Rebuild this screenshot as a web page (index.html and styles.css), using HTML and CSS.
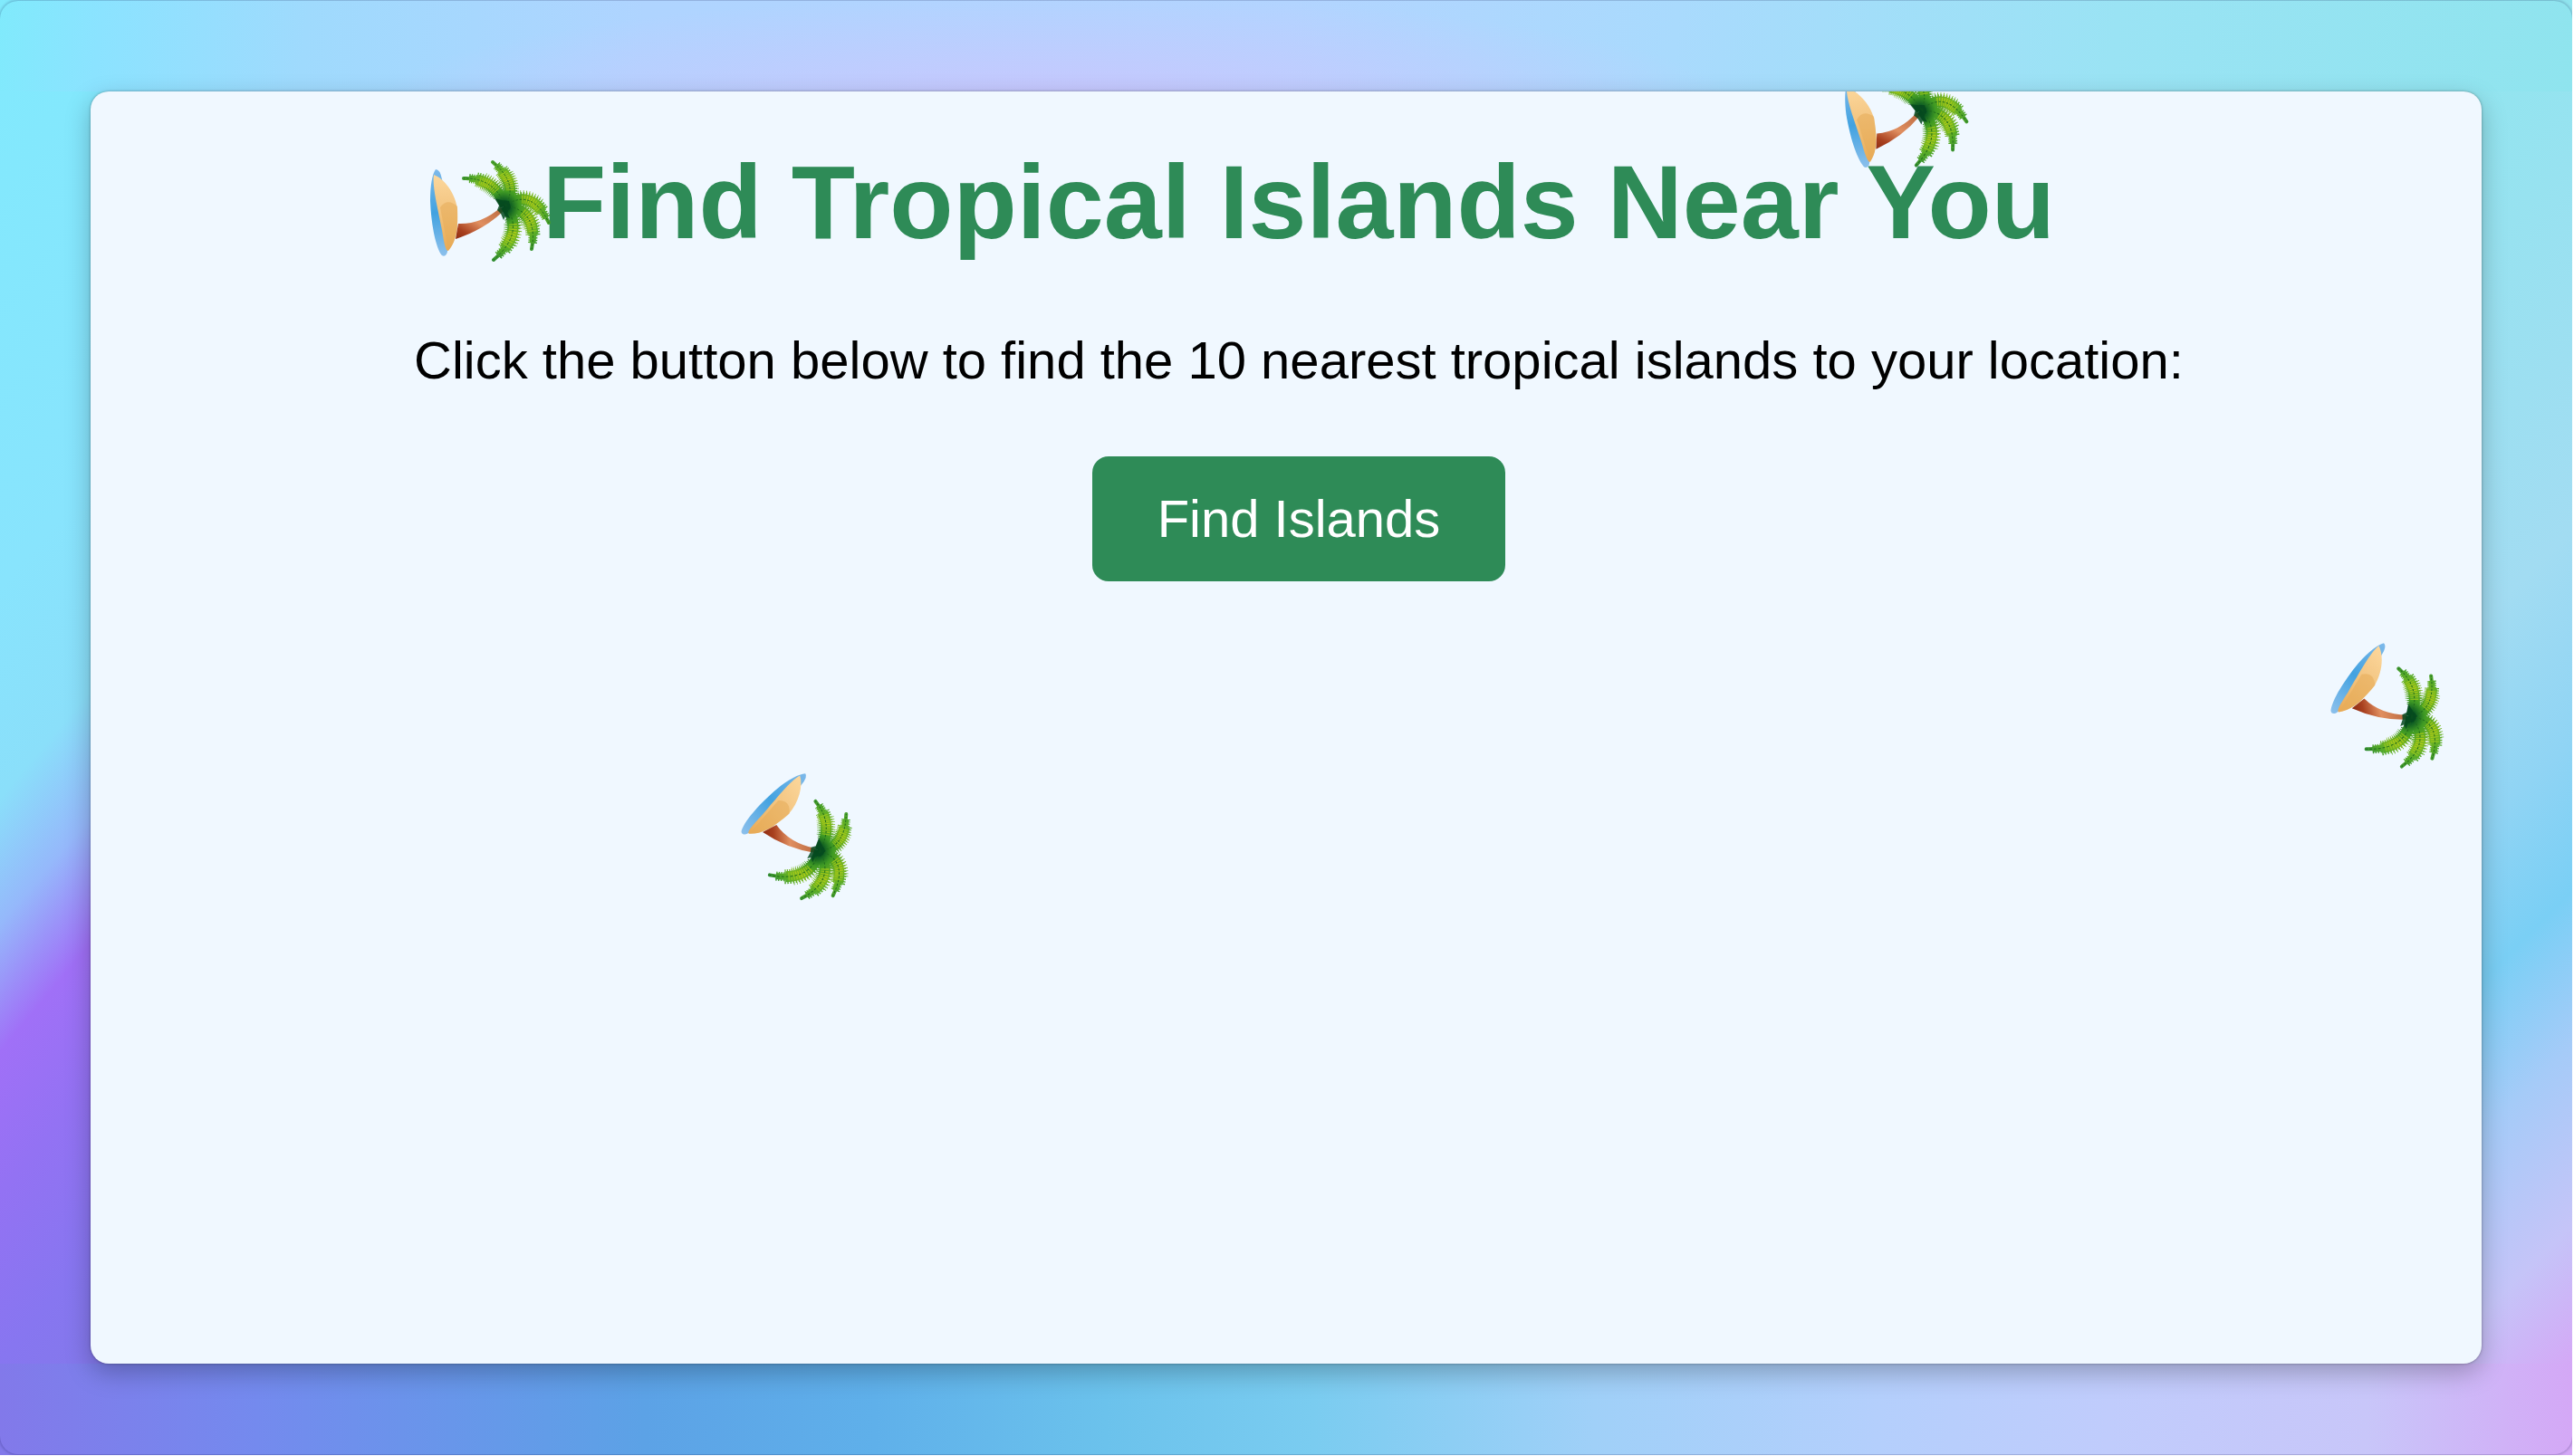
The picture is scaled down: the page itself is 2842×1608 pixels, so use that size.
FILE: index.html
```html
<!DOCTYPE html>
<html lang="en">
<head>
<meta charset="utf-8">
<title>Find Tropical Islands Near You</title>
<link rel="stylesheet" href="styles.css">
</head>
<body>
<svg class="sprite" aria-hidden="true">
  <defs>
    <linearGradient id="sand" x1="0" y1="0" x2="0" y2="1"><stop offset="0" stop-color="#fcd79c"/><stop offset=".45" stop-color="#f3c581"/><stop offset="1" stop-color="#e9aa55"/></linearGradient>
    <linearGradient id="sea" x1="0" y1="0" x2="0" y2="1"><stop offset="0" stop-color="#7db9ea"/><stop offset=".5" stop-color="#42a2e0"/><stop offset="1" stop-color="#8cc0ec"/></linearGradient>
    <linearGradient id="trunk" x1="0" y1="1" x2="1" y2="0"><stop offset="0" stop-color="#8f2c12"/><stop offset=".2" stop-color="#a8401f"/><stop offset=".5" stop-color="#e08f60"/><stop offset="1" stop-color="#b9683f"/></linearGradient>
    <radialGradient id="leaf" gradientUnits="userSpaceOnUse" cx="82" cy="50" r="62"><stop offset="0" stop-color="#04431d"/><stop offset=".12" stop-color="#0c5a23"/><stop offset=".28" stop-color="#3f9a24"/><stop offset=".55" stop-color="#7db81e"/><stop offset=".75" stop-color="#55aa28"/><stop offset="1" stop-color="#2d8a35"/></radialGradient>
    <radialGradient id="glow" gradientUnits="userSpaceOnUse" cx="82" cy="50" r="62"><stop offset=".2" stop-color="#6fb51f"/><stop offset=".5" stop-color="#b5cc16"/><stop offset=".8" stop-color="#6dbb28"/></radialGradient>
    <path id="f1" pathLength="100" d="M84 48Q71 17 38 18"/>
    <path id="f2" pathLength="100" d="M84 48Q99 24 70 0"/>
    <path id="f3" pathLength="100" d="M84 48Q113 28 132 67"/>
    <path id="f4" pathLength="100" d="M84 48Q121 54 113 96"/>
    <path id="f5" pathLength="100" d="M84 48Q106 78 71 108"/>
    <g id="fronds"><use href="#f1"/><use href="#f2"/><use href="#f3"/><use href="#f4"/><use href="#f5"/></g>
    <symbol id="island" viewBox="0 0 140 120" overflow="visible">
      <path fill="url(#sea)" d="M7 8C3 14 1 26 1 43 2 66 6 91 13 102 15 105 19 104 20 99L24 60 14 19Q12 8 7 8Z"/>
      <path fill="url(#sand)" d="M5 14C16 18 28 33 31 51 32 72 30 88 21 98 18 99 16 88 14 75 9 50 3 26 5 14Z"/>
      <path fill="#e6ab58" opacity=".55" d="M12 50Q20 39 31 49L31 74Q28 90 21 97Z"/>
      <path fill="url(#trunk)" d="M32 68Q57 69 79 50L82 54Q60 75 29 85Z"/>
      <g fill="none">
        <g stroke="url(#leaf)">
          <use href="#fronds" stroke-width="10" stroke-dasharray="2 2 2 2 2 2 2 2 2 2 2 2 2 2 2 2 2 2 2 2 2 2 2 2 2 2 2 2 2 2 2 2 2 2 2 2 2 2 2 2 2 2 2 2 2 2 0 100"/>
          <use href="#fronds" stroke-width="16" stroke-dasharray="0 22 2 2 2 2 2 2 2 2 2 2 2 2 2 2 2 2 2 2 2 2 2 2 2 2 2 2 2 2 0 100"/>
          <use href="#fronds" stroke-width="20" stroke-dasharray="0 30 1 3 1 3 1 3 1 3 1 3 1 3 1 3 1 3 1 3 0 100"/>
          <use href="#fronds" stroke-width="12" stroke-dasharray="74 100"/>
          <use href="#fronds" stroke-width="7" stroke-dasharray="90 100"/>
          <use href="#fronds" stroke-width="4" stroke-linecap="round"/>
        </g>
        <use href="#fronds" stroke="url(#glow)" stroke-width="9" stroke-dasharray="0 32 2 2 2 2 2 2 2 2 2 2 2 2 2 2 2 2 2 2 2 2 0 100"/>
        <use href="#fronds" stroke="#1f6a1c" stroke-width="1" stroke-dasharray="4 3"/>
      </g>
      <path fill="#05491f" opacity=".85" d="M72 40 80 42 88 43 90 50 86 56 89 62 84 60 82 64 79 57 75 53 77 48Z"/>
    </symbol>
  </defs>
</svg>
<div class="backdrop">
  <main class="card">
    <h1 class="title">Find Tropical Islands Near You</h1>
    <p class="lead">Click the button below to find the 10 nearest tropical islands to your location:</p>
    <button class="find" type="button">Find Islands</button>
    <svg class="island island-a" aria-hidden="true"><use href="#island"/></svg>
    <svg class="island island-b" aria-hidden="true"><use href="#island"/></svg>
    <svg class="island island-c" aria-hidden="true"><use href="#island"/></svg>
    <svg class="island island-d" aria-hidden="true"><use href="#island"/></svg>
  </main>
</div>
</body>
</html>
```
FILE: styles.css
```css
* { box-sizing: border-box; }
body { margin: 0; background: #fff; font-family: "Liberation Sans", Arial, sans-serif; }
.sprite { position: absolute; width: 0; height: 0; }
.backdrop {
  position: relative;
  display: flex;
  min-height: calc(100vh - 1px);
  margin: 0 2px 1px 0;
  padding: 101px 100px;
  overflow: hidden;
  background:
    radial-gradient(750px 120px at 41% 115px, #c8c6fe 0%, rgba(196, 202, 254, .7) 45%, rgba(180, 212, 255, 0) 100%) top / 100% 101px no-repeat,
    linear-gradient(90deg, #8279ea 0%, #748aee 10%, #5ca2e6 25%, #5fb0ea 34%, #6bc2ec 43%, #7accf0 51%, #a0d0f8 62%, #b4cffc 73%, #c0ccfc 82%, #c8c6f9 92%, #d4a8f6 100%) bottom / 100% 101px no-repeat,
    linear-gradient(97deg, #80eafc 0%, #8be3ff 4%, #9fdafd 12%, #afd4ff 25%, #b2d4ff 50%, #a9dafd 65%, #9ae3f4 82%, #8fe4ee 100%) top / 100% 101px no-repeat,
    linear-gradient(130deg, #82e9fd 0%, #88e4fd 35%, #8adffa 50%, #95b8fb 59%, #a070f7 68%, #9372f3 78%, #8776f0 90%, #8279ea 100%) left 101px / 130px calc(100% - 202px) no-repeat,
    linear-gradient(135deg, #92e5ef 0%, #a2dcf2 40%, #90d4f4 55%, #7acff5 66%, #a5cbf8 77%, #c5c4f8 90%, #d4a8f6 100%) right 101px / 130px calc(100% - 202px) no-repeat;
}
.backdrop::after {
  content: "";
  position: absolute;
  inset: 1px 0 1px 0;
  border-radius: 20px;
  box-shadow: 0 0 3px 1px rgba(0, 0, 60, .25);
  pointer-events: none;
}
.card {
  position: relative;
  flex: 1;
  display: flex;
  flex-direction: column;
  align-items: center;
  padding: 56px 0 0 28px;
  overflow: hidden;
  border-radius: 20px;
  background: #f0f8ff;
  box-shadow: 0 0 3px rgba(0, 0, 0, .35), 0 10px 28px rgba(0, 0, 0, .25);
}
.title { margin: 0; color: #2e8b57; font-size: 115px; line-height: 132px; }
.lead { margin: 76px 0 73px; font-size: 58px; line-height: 66px; color: #000; }
.find {
  padding: 36px 72px;
  border: 0;
  border-radius: 18px;
  background: #2e8b57;
  color: #fff;
  font: 58px/66px "Liberation Sans", Arial, sans-serif;
}
.island { position: absolute; width: 140px; height: 120px; overflow: visible; }
.island-a { left: 374px; top: 78px; }
.island-b { left: 1939px; top: -26px; transform: rotate(-7deg); }
.island-c { left: 2474px; top: 630px; transform: rotate(42deg); }
.island-d { left: 717px; top: 775px; transform: rotate(52deg); }
```
